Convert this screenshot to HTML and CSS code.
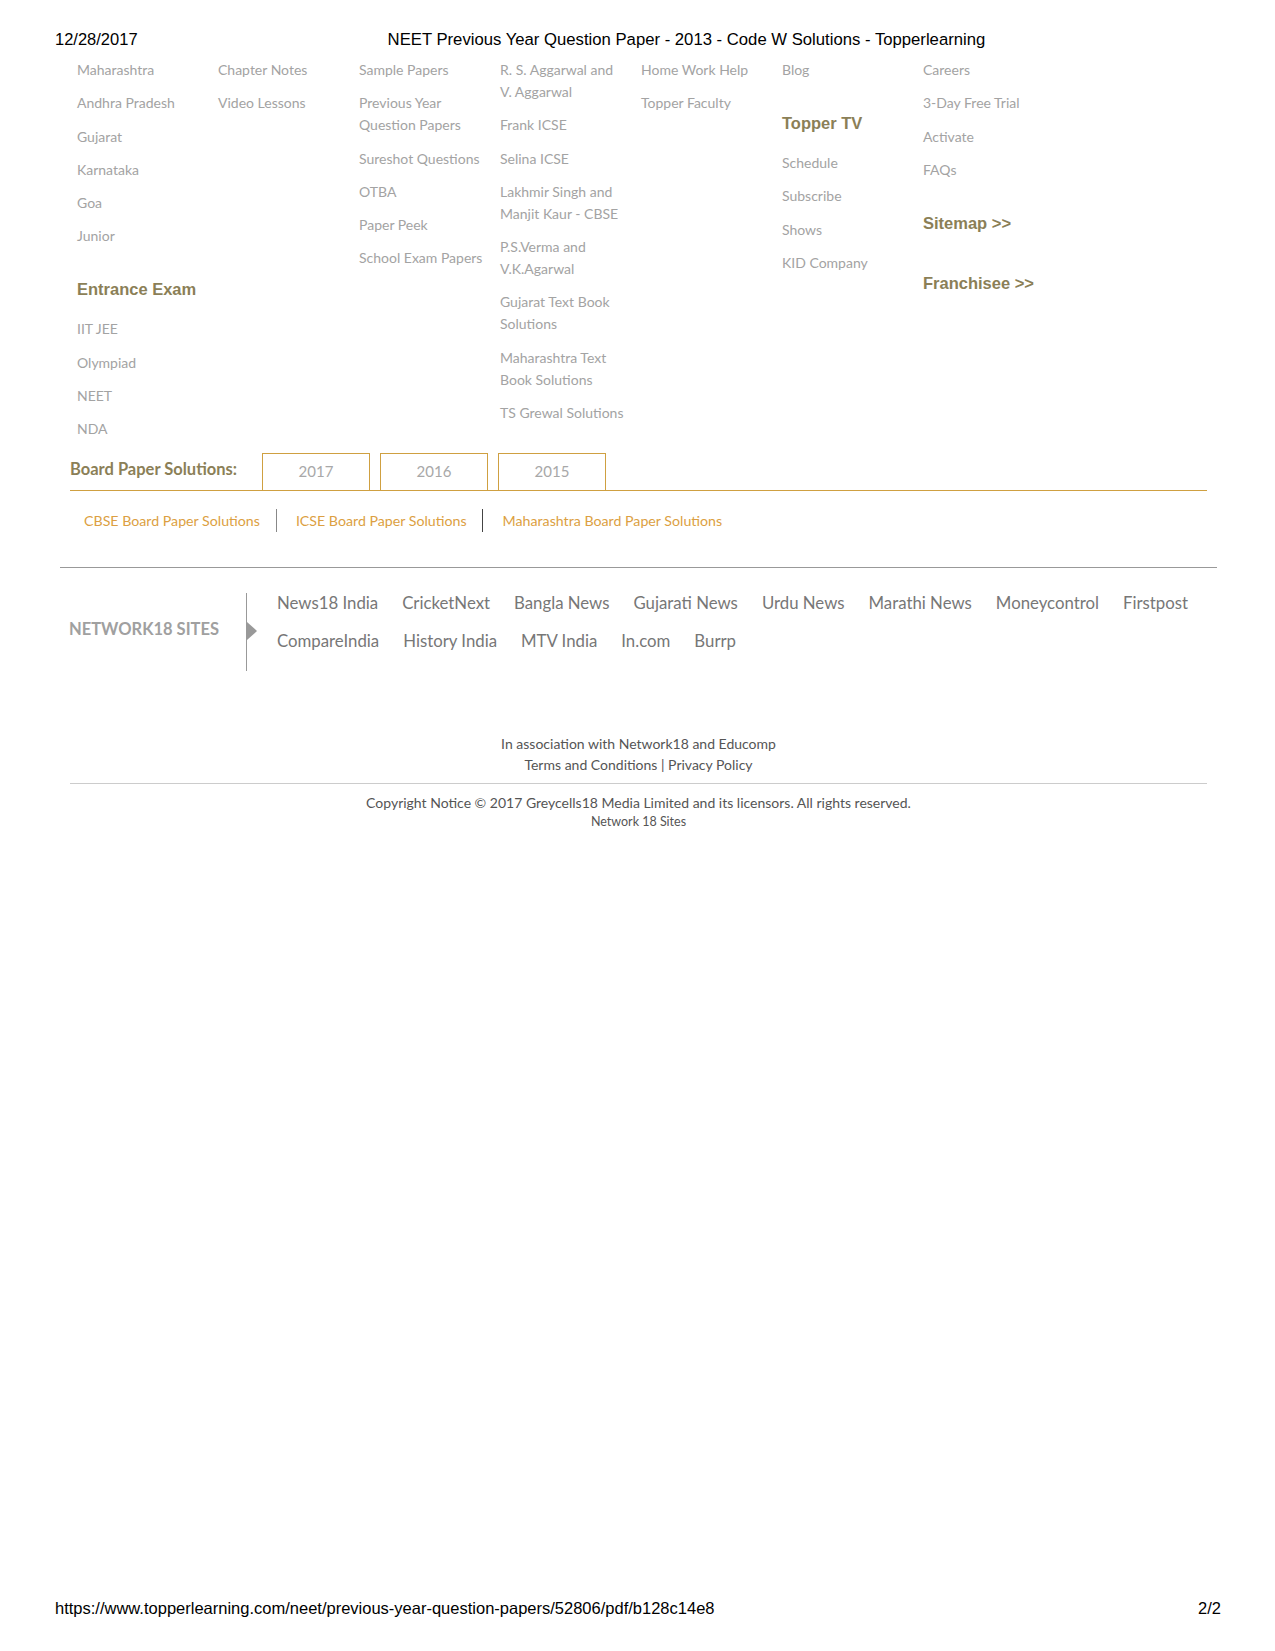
FILE: index.html
```html
<!DOCTYPE html>
<html lang="en">
<head>
  <meta charset="UTF-8">
  <meta name="viewport" content="width=device-width, initial-scale=1.0">
  <title>NEET Previous Year Question Paper - 2013 - Code W Solutions - Topperlearning</title>
  <link rel="stylesheet" href="styles.css">
</head>
<body>
  <div class="print-header">
    <span class="print-date">12/28/2017</span>
    <span class="print-title">NEET Previous Year Question Paper - 2013 - Code W Solutions - Topperlearning</span>
  </div>

  <div class="page">
    <div class="mega">
      <div class="col">
        <ul class="links">
          <li><a href="#">Maharashtra</a></li>
          <li><a href="#">Andhra Pradesh</a></li>
          <li><a href="#">Gujarat</a></li>
          <li><a href="#">Karnataka</a></li>
          <li><a href="#">Goa</a></li>
          <li><a href="#">Junior</a></li>
        </ul>
        <h4 class="col-title">Entrance Exam</h4>
        <ul class="links">
          <li><a href="#">IIT JEE</a></li>
          <li><a href="#">Olympiad</a></li>
          <li><a href="#">NEET</a></li>
          <li><a href="#">NDA</a></li>
        </ul>
      </div>
      <div class="col">
        <ul class="links">
          <li><a href="#">Chapter Notes</a></li>
          <li><a href="#">Video Lessons</a></li>
        </ul>
      </div>
      <div class="col">
        <ul class="links">
          <li><a href="#">Sample Papers</a></li>
          <li><a href="#">Previous Year Question Papers</a></li>
          <li><a href="#">Sureshot Questions</a></li>
          <li><a href="#">OTBA</a></li>
          <li><a href="#">Paper Peek</a></li>
          <li><a href="#">School Exam Papers</a></li>
        </ul>
      </div>
      <div class="col">
        <ul class="links">
          <li><a href="#">R. S. Aggarwal and V. Aggarwal</a></li>
          <li><a href="#">Frank ICSE</a></li>
          <li><a href="#">Selina ICSE</a></li>
          <li><a href="#">Lakhmir Singh and Manjit Kaur - CBSE</a></li>
          <li><a href="#">P.S.Verma and V.K.Agarwal</a></li>
          <li><a href="#">Gujarat Text Book Solutions</a></li>
          <li><a href="#">Maharashtra Text Book Solutions</a></li>
          <li><a href="#">TS Grewal Solutions</a></li>
        </ul>
      </div>
      <div class="col">
        <ul class="links">
          <li><a href="#">Home Work Help</a></li>
          <li><a href="#">Topper Faculty</a></li>
        </ul>
      </div>
      <div class="col">
        <ul class="links">
          <li><a href="#">Blog</a></li>
        </ul>
        <h4 class="col-title">Topper TV</h4>
        <ul class="links">
          <li><a href="#">Schedule</a></li>
          <li><a href="#">Subscribe</a></li>
          <li><a href="#">Shows</a></li>
          <li><a href="#">KID Company</a></li>
        </ul>
      </div>
      <div class="col">
        <ul class="links">
          <li><a href="#">Careers</a></li>
          <li><a href="#">3-Day Free Trial</a></li>
          <li><a href="#">Activate</a></li>
          <li><a href="#">FAQs</a></li>
        </ul>
        <h4 class="col-title">Sitemap &gt;&gt;</h4>
        <h4 class="col-title franchisee">Franchisee &gt;&gt;</h4>
      </div>
    </div>

    <div class="board">
      <div class="board-row">
        <span class="board-label">Board Paper Solutions:</span>
        <div class="tabs">
          <a class="tab" href="#">2017</a>
          <a class="tab" href="#">2016</a>
          <a class="tab" href="#">2015</a>
        </div>
      </div>
      <div class="board-links">
        <a href="#">CBSE Board Paper Solutions</a>
        <span class="sep"></span>
        <a href="#">ICSE Board Paper Solutions</a>
        <span class="sep dark"></span>
        <a href="#">Maharashtra Board Paper Solutions</a>
      </div>
    </div>

    <div class="network">
      <div class="network-label">NETWORK18 SITES</div>
      <div class="network-links">
        <a href="#">News18 India</a>
        <a href="#">CricketNext</a>
        <a href="#">Bangla News</a>
        <a href="#">Gujarati News</a>
        <a href="#">Urdu News</a>
        <a href="#">Marathi News</a>
        <a href="#">Moneycontrol</a>
        <a href="#">Firstpost</a>
        <a href="#">CompareIndia</a>
        <a href="#">History India</a>
        <a href="#">MTV India</a>
        <a href="#">In.com</a>
        <a href="#">Burrp</a>
      </div>
    </div>

    <div class="site-footer">
      <p>In association with Network18 and Educomp</p>
      <p><a href="#">Terms and Conditions</a> | <a href="#">Privacy Policy</a></p>
      <div class="copyright">
        <p>Copyright Notice © 2017 Greycells18 Media Limited and its licensors. All rights reserved.</p>
        <p class="small">Network 18 Sites</p>
      </div>
    </div>
  </div>

  <div class="print-footer">
    <span>https://www.topperlearning.com/neet/previous-year-question-papers/52806/pdf/b128c14e8</span>
    <span>2/2</span>
  </div>
</body>
</html>
```

FILE: styles.css
```css
* {
  margin: 0;
  padding: 0;
  box-sizing: border-box;
}

body {
  background: #fff;
  font-family: Lato, "Open Sans", sans-serif;
  color: #333;
  min-height: 1651px;
  display: flex;
  flex-direction: column;
}

a {
  color: inherit;
  text-decoration: none;
}

ul {
  list-style: none;
}

/* print header / footer */
.print-header,
.print-footer {
  font-family: "Liberation Sans", Arial, sans-serif;
  font-size: 16.5px;
  line-height: 20px;
  color: #000;
  display: flex;
  align-items: baseline;
  padding: 0 54px 0 55px;
}

.print-header {
  padding-top: 29px;
}

.print-title {
  margin-left: 250px;
  font-size: 16.7px;
}

.print-footer {
  justify-content: space-between;
  padding-bottom: 33px;
}

.page {
  flex: 1;
}

/* mega menu */
.mega {
  display: flex;
  padding: 9px 0 0 77px;
}

.col {
  width: 141px;
  padding-right: 16px;
}

.links {
  display: flex;
  flex-direction: column;
  gap: 11.3px;
}

.links a {
  font-size: 14px;
  line-height: 22px;
  color: #a3a3a3;
}

.col-title {
  font-family: "Liberation Sans", Arial, sans-serif;
  font-weight: bold;
  font-size: 16.5px;
  line-height: 20px;
  color: #8b7f57;
  margin: 32px 0 19px;
}

.col-title + .col-title {
  margin-top: 0;
}

.col-title.franchisee {
  margin-top: 40px;
}

/* board papers */
.board {
  padding: 13px 68px 0 70px;
}

.board-row {
  display: flex;
  align-items: center;
  border-bottom: 1px solid #cfa041;
}

.board-label {
  font-weight: bold;
  font-size: 16.5px;
  color: #8b7f57;
  width: 192px;
  margin-top: -6px;
}

.tabs {
  display: flex;
  gap: 10px;
}

.tab {
  width: 108px;
  height: 37px;
  border: 1px solid #cfa041;
  border-bottom: none;
  display: flex;
  align-items: center;
  justify-content: center;
  font-size: 15px;
  color: #a8a8a8;
  padding-bottom: 2px;
}

.board-links {
  display: flex;
  align-items: center;
  padding: 18px 0 0 14px;
  font-size: 14.2px;
  color: #dc9f42;
}

.sep {
  width: 1px;
  height: 23px;
  background: #888;
  margin: 0 19px 0 16px;
}

.sep.dark {
  background: #444;
  margin: 0 20px 0 15px;
}

/* network18 */
.network {
  display: flex;
  align-items: center;
  margin: 35px 58px 0 60px;
  padding-top: 25px;
  padding-left: 9px;
  border-top: 1px solid #999;
}

.network-label {
  width: 177px;
  font-weight: bold;
  font-size: 16.5px;
  color: #a0a0a0;
  margin-top: -6px;
}

.network-links {
  position: relative;
  flex: 1;
  display: flex;
  flex-wrap: wrap;
  column-gap: 24px;
  row-gap: 18px;
  padding: 0 0 20px 30px;
  border-left: 1px solid #999;
}

.network-links::before {
  content: "";
  position: absolute;
  left: 0;
  top: 29px;
  border-style: solid;
  border-width: 9px 0 9px 10px;
  border-color: transparent transparent transparent #999;
}

.network-links a {
  font-size: 16.8px;
  line-height: 20px;
  color: #777;
}

/* footer */
.site-footer {
  padding: 62px 68px 0 70px;
  text-align: center;
  font-size: 14px;
  line-height: 21px;
  color: #555;
}

.copyright {
  margin-top: 8px;
  padding-top: 9px;
  border-top: 1px solid #ccc;
  line-height: 20px;
}

.copyright .small {
  font-size: 12.5px;
  line-height: 18px;
}
```
